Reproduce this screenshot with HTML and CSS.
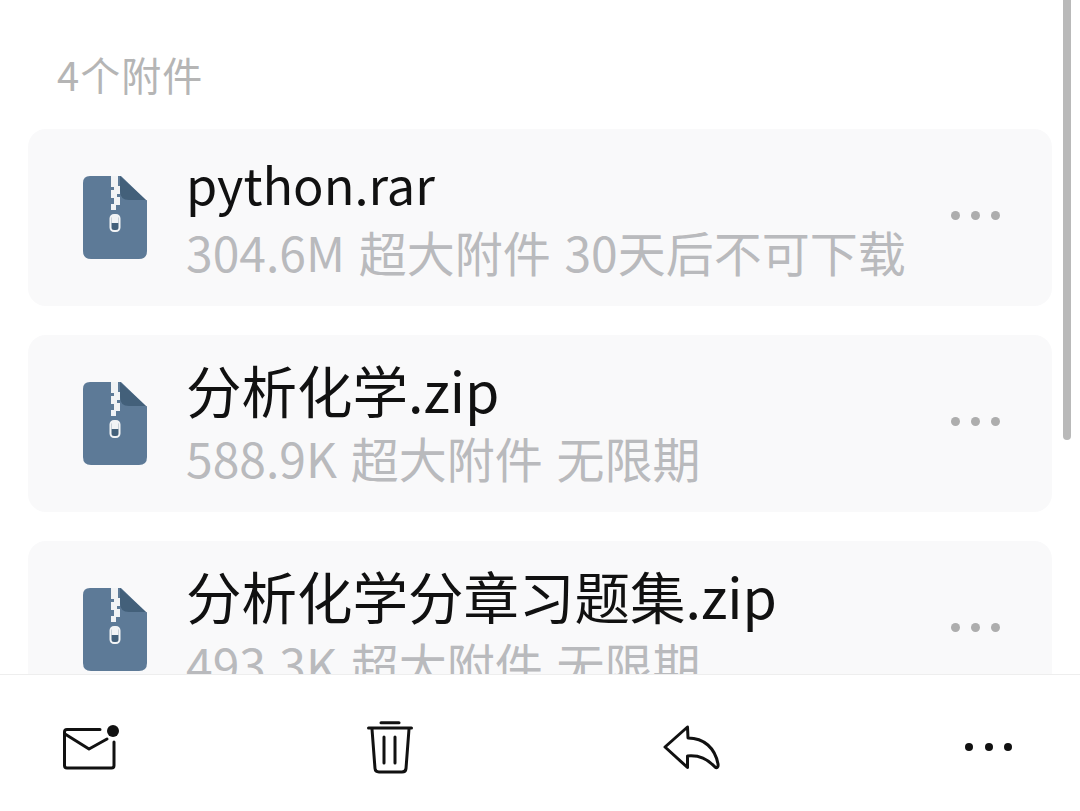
FILE: index.html
```html
<!DOCTYPE html>
<html lang="zh">
<head>
  <meta charset="UTF-8">
  <meta name="viewport" content="width=device-width, initial-scale=1.0">
  <title>附件</title>
  <link rel="stylesheet" href="styles.css">
</head>
<body>

  <svg class="svg-defs" width="0" height="0">
    <symbol id="zipIcon" viewBox="0 0 64 84">
      <path d="M7 0H38L64 25V75Q64 83 56 83H8Q0 83 0 75V7Q0 0 7 0Z" fill="#5d7a97"/>
      <path d="M37 0L64 25V24H46Q37 24 37 15Z" fill="#43607a"/>
      <path d="M28 0H35V10H37V18H34V21H37V29H33V34H28V28H31V22H28V14H31V11H28Z" fill="#f1f3f5"/>
      <rect x="27.500" y="39" width="9" height="16" rx="3.500" fill="#43607a" stroke="#f1f3f5" stroke-width="2"/>
      <rect x="28.500" y="40" width="7" height="7" fill="#f1f3f5"/>
    </symbol>
  </svg>

  <!-- Attachment list -->
  <div class="content">
    <div class="scrollbar"></div>
    <div class="section-title">4个附件</div>

    <div class="file-card">
      <svg class="file-icon"><use href="#zipIcon"/></svg>
      <div class="file-info">
        <div class="file-name latin">python.rar</div>
        <div class="file-meta">304.6M 超大附件 30天后不可下载</div>
      </div>
      <div class="file-more"><span></span><span></span><span></span></div>
    </div>

    <div class="file-card">
      <svg class="file-icon"><use href="#zipIcon"/></svg>
      <div class="file-info">
        <div class="file-name">分析化学.zip</div>
        <div class="file-meta">588.9K 超大附件 无限期</div>
      </div>
      <div class="file-more"><span></span><span></span><span></span></div>
    </div>

    <div class="file-card">
      <svg class="file-icon"><use href="#zipIcon"/></svg>
      <div class="file-info">
        <div class="file-name">分析化学分章习题集.zip</div>
        <div class="file-meta">493.3K 超大附件 无限期</div>
      </div>
      <div class="file-more"><span></span><span></span><span></span></div>
    </div>
  </div>

  <!-- Bottom toolbar -->
  <div class="toolbar">
    <svg class="tool-icon" width="60" height="52" viewBox="0 0 60 52" fill="none" stroke="#111" stroke-width="3" stroke-linecap="round" stroke-linejoin="round">
      <path d="M40 8.500H7Q4.500 8.500 4.500 11V44.500Q4.500 47 7 47H51.500Q54 47 54 44.500V21"/>
      <path d="M5 13L29 28L47 18"/>
      <circle cx="53" cy="10" r="6" fill="#111" stroke="none"/>
    </svg>
    <svg class="tool-icon" width="50" height="56" viewBox="0 0 50 56" fill="none" stroke="#111" stroke-width="3" stroke-linecap="round" stroke-linejoin="round">
      <path d="M16 3.700H34"/>
      <path d="M3.500 9H46.500"/>
      <path d="M7 10L10 49.500Q10.300 53 14 53H37Q40.700 53 41 49.500L44 10"/>
      <path d="M19 18V44M30 18V44"/>
    </svg>
    <svg class="tool-icon" width="60" height="48" viewBox="0 0 60 48" fill="none" stroke="#111" stroke-width="3" stroke-linecap="round" stroke-linejoin="round">
      <path d="M27.500 4L5 24L27.500 44.500V33C40 32 47 36 55 44C57 45.500 58.500 44 58 41C55 25 44 15 28 15Z"/>
    </svg>
    <div class="tool-more"><span></span><span></span><span></span></div>
  </div>

</body>
</html>
```

FILE: styles.css
```css
* {
  box-sizing: border-box;
}

body {
  margin: 0;
  background-color: #fff;
  font-family: "Noto Sans CJK SC", "Noto Sans", sans-serif;
}

.svg-defs {
  display: block;
  height: 0;
}

/* Attachment list */
.content {
  position: relative;
  height: 674px;
  overflow: hidden;
  padding: 48px 28px 0;
}

.scrollbar {
  position: absolute;
  top: 0;
  left: 1063px;
  width: 8px;
  height: 440px;
  background-color: #b9b9b9;
  border-radius: 0 0 4px 4px;
}

.section-title {
  margin-left: 29px;
  margin-bottom: 28px;
  height: 53px;
  line-height: 53px;
  font-size: 40px;
  letter-spacing: 1px;
  color: #b5b5b5;
}

.file-card {
  display: flex;
  align-items: center;
  height: 177px;
  margin-bottom: 29px;
  padding-left: 55px;
  background-color: #f9f9fa;
  border-radius: 18px;
}

.file-icon {
  width: 64px;
  height: 84px;
  flex-shrink: 0;
}

.file-info {
  flex: 1;
  margin-left: 39px;
  padding-top: 3px;
}

.file-name {
  margin-top: -4px;
  font-size: 55.500px;
  line-height: 66px;
  color: #111;
  white-space: nowrap;
}

.file-name.latin {
  font-size: 50.500px;
}

.file-meta {
  margin-top: 2px;
  font-size: 48px;
  line-height: 66px;
  word-spacing: 3px;
  color: #b9babd;
  white-space: nowrap;
}

.file-more {
  display: flex;
  gap: 11px;
  margin-right: 52px;
  margin-bottom: 4px;
}

.file-more span {
  width: 9px;
  height: 9px;
  border-radius: 50%;
  background-color: #adadad;
}

/* Bottom toolbar */
.toolbar {
  display: flex;
  align-items: center;
  justify-content: space-between;
  height: 137px;
  padding: 8px 68px 0 60px;
  background-color: #fff;
  border-top: 1px solid #eee;
}

.tool-more {
  display: flex;
  gap: 11.500px;
}

.tool-more span {
  width: 8px;
  height: 8px;
  border-radius: 50%;
  background-color: #111;
}
```
